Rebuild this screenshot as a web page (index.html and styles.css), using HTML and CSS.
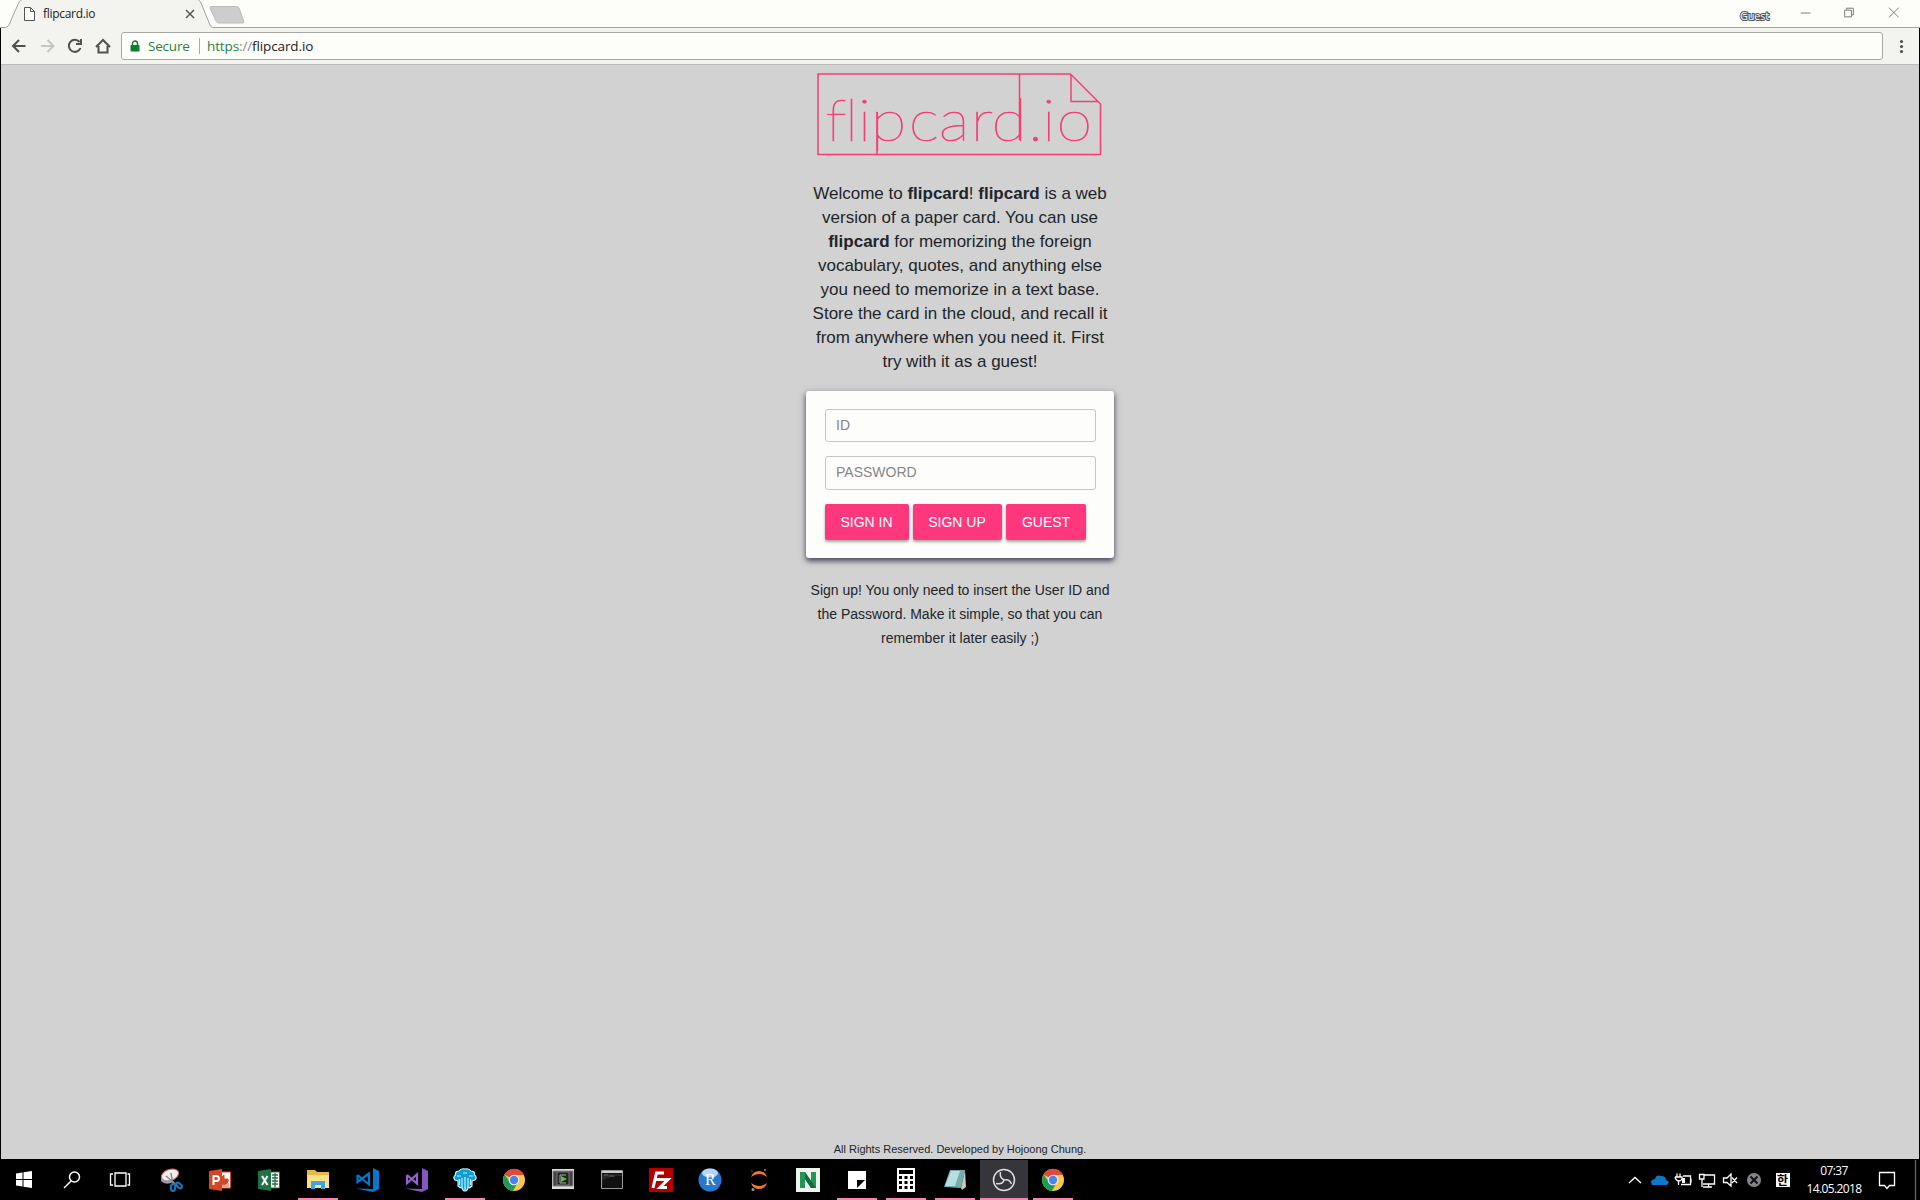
FILE: index.html
```html
<!DOCTYPE html>
<html lang="en">
<head>
<meta charset="utf-8">
<title>flipcard.io</title>
<link rel="stylesheet" href="styles.css">
</head>
<body>
<div class="desktop">
  <header class="tabstrip">
    <svg class="tabs" width="260" height="28" viewBox="0 0 260 28">
      <path class="tab-fill" d="M0 28L7 27L19 1Q20 0 22 0H197Q199 0 200 2L212 27V28Z"/>
      <path class="edge" d="M0 27.500H5Q8 27 9 25L19 2Q20 .5 22 -.5M198 -.5Q200 .5 201 3L210 25Q211 27.500 213 27.500H260"/>
      <path class="new-tab" d="M211 6.500H236Q238 6.500 239 8L244 22Q244 23 242 23H219Q217 23 216 21L210 8Q209.500 6.500 211 6.500Z"/>
      <path fill="#fff" stroke="#555" d="M24.500 7.500H30.500L34.500 11.500V20.500H24.500ZM30.500 7.500V11.500H34.500"/>
      <path stroke="#555" stroke-width="1.500" d="M186 10L194 18M194 10L186 18"/>
      <text x="43" y="18">flipcard.io</text>
    </svg>
    <div class="strip-space"></div>
    <span class="guest">Guest</span>
    <svg class="window-buttons" width="142" height="28" viewBox="0 0 142 28" fill="none" stroke="#777">
      <path d="M21 13.500H31M66.500 10.500H73.500V17.500H66.500ZM68.500 10V8.500H75.500V15.500H74M112.500 8L122.500 18M122.500 8L112.500 18"/>
    </svg>
  </header>
  <nav class="toolbar">
    <svg width="120" height="36" viewBox="0 0 120 36" fill="none" stroke="#505050" stroke-width="2">
      <path d="M25.500 18H13M19 12L13 18L19 24"/>
      <path stroke="#c4c4c4" d="M41 18H53M47.500 12L53.500 18L47.500 24"/>
      <path d="M79.500 14A6 6 0 1 0 80.500 20M81 11V16H76"/>
      <path d="M96 19L103 12L110 19M98.500 18V24.500H107.500V18"/>
    </svg>
    <div class="omnibox">
      <svg width="10" height="13" viewBox="0 0 10 13"><path fill="#0b8030" d="M1 5H9Q9.500 5 9.500 6V11.500H.5V6Q.5 5 1 5Z"/><path fill="none" stroke="#0b8030" stroke-width="1.400" d="M2.500 5V3.500A2.500 2.500 0 0 1 7.500 3.500V5"/></svg>
      <span class="secure">Secure</span>
      <span class="url"><span class="scheme">https</span><span class="slashes">://</span>flipcard.io</span>
    </div>
    <svg width="36" height="36" viewBox="0 0 36 36" fill="#505050"><circle cx="18.500" cy="13.500" r="1.600"/><circle cx="18.500" cy="18.500" r="1.600"/><circle cx="18.500" cy="23.500" r="1.600"/></svg>
  </nav>
  <main class="page">
    <div class="column">
      <svg class="logo" width="308" height="106" viewBox="6 4 308 106">
        <path d="M18 14H270.500L300.500 44V94.500H18ZM271 14V41.500H298M219.500 14V80M77 52V94"/>
        <text transform="scale(1.120 1)" y="81.500" x="22.500 40 51.500 63.400 97 124 152.500 171 203.500 216 229">flipcard.io</text>
      </svg>
      <p class="intro">Welcome to <b>flipcard</b>! <b>flipcard</b> is a web<br>version of a paper card. You can use<br><b>flipcard</b> for memorizing the foreign<br>vocabulary, quotes, and anything else<br>you need to memorize in a text base.<br>Store the card in the cloud, and recall it<br>from anywhere when you need it. First<br>try with it as a guest!</p>
      <form class="card">
        <input class="field" type="text" placeholder="ID">
        <input class="field second" type="text" placeholder="PASSWORD">
        <div class="buttons">
          <button class="btn in" type="button">SIGN IN</button>
          <button class="btn up" type="button">SIGN UP</button>
          <button class="btn visitor" type="button">GUEST</button>
        </div>
      </form>
      <p class="hint">Sign up! You only need to insert the User ID and<br>the Password. Make it simple, so that you can<br>remember it later easily ;)</p>
    </div>
    <footer class="legal">All Rights Reserved. Developed by Hojoong Chung.</footer>
  </main>
  <footer class="taskbar">
    <div class="system">
      <svg viewBox="0 0 48 41"><path fill="#fff" d="M16 14.500L22.500 13.500V20H16ZM23.500 13.300L32 12V20H23.500ZM16 21H22.500V27.500L16 26.500ZM23.500 21H32V29L23.500 27.700Z"/></svg>
      <svg viewBox="0 0 48 41" fill="none" stroke="#fff" stroke-width="1.500"><circle cx="26.500" cy="18" r="5"/><path d="M23 22L16 29"/></svg>
      <svg viewBox="0 0 48 41" fill="none" stroke="#fff" stroke-width="1.300"><path d="M19 14H30V27H19ZM17 15H14.500V26H17M31.500 15H33.500V26H31.500"/></svg>
    </div>
    <div class="apps">
      <div class="app"><svg viewBox="0 0 24 24"><ellipse cx="11" cy="7" rx="9" ry="5.500" transform="rotate(-20 11 7)" fill="#eee" stroke="#c66"/><path d="M2 10Q8 15 14 11V14Q7 18 2 13Z" fill="#99a"/><path d="M7 8L19 18M12 5L14 17" stroke="#888" stroke-width="1.500"/><g fill="none" stroke="#1675bb" stroke-width="2"><ellipse cx="14" cy="19.500" rx="2.200" ry="3.500"/><ellipse cx="20" cy="17.500" rx="2" ry="3.500" transform="rotate(-50 20 17.500)"/></g></svg></div>
      <div class="app"><svg viewBox="0 0 24 24"><path fill="#fff" stroke="#d24726" d="M12 4H22.500V20H12Z"/><path d="M14 9A4 4 0 1 0 20 11H16V7ZM14 16H21M14 18H21" fill="#d24726" stroke="#d24726"/><path fill="#d24726" d="M1 3L14 1V23L1 21Z"/><path fill="none" stroke="#fff" stroke-width="2" d="M5.500 17V8H8Q11 8 11 10.500Q11 13 8 13H6"/></svg></div>
      <div class="app"><svg viewBox="0 0 24 24"><path fill="#fff" stroke="#207245" d="M12 4H22.500V20H12Z"/><path d="M15 7H21M15 10H21M15 13H21M15 16H21M18 5V19" stroke="#207245" stroke-width="1.300"/><path fill="#207245" d="M1 3L14 1V23L1 21Z"/><path stroke="#fff" stroke-width="2" d="M5 8L10.500 17M10.500 8L5 17"/></svg></div>
      <div class="app open"><svg viewBox="0 0 24 24"><path fill="#e8b84b" d="M1 2H9L11 4H23V20H1Z"/><path fill="#fbe08a" d="M1 7H23V20H1Z"/><path fill="#35a9e1" d="M5 13H19V21H15V17H9V21H5Z"/></svg></div>
      <div class="app"><svg viewBox="0 0 24 24"><path fill="#0078d0" d="M18 0L24 3V21L18 24L1 20.500L18 21Z"/><path fill="none" stroke="#0078d0" stroke-width="2.200" d="M2.500 7V14L14 5.500V16.500L2.500 7"/></svg></div>
      <div class="app"><svg viewBox="0 0 24 24"><path fill="#8555c0" d="M18 0L24 3V21L18 24L1 20.500L18 21Z"/><path fill="none" stroke="#9560d0" stroke-width="2.200" d="M3 7V15L13 6.500V15.500L3 7"/></svg></div>
      <div class="app open"><svg viewBox="0 0 24 24"><g fill="#0b9fd6" stroke="#c8f2ff" stroke-width="1.200"><path d="M2 12Q-.5 9 2.500 7Q2 3 6 3Q8 0 12 1Q16 0 18 3Q22 3 21.500 7Q24.500 9 22 12L19 13V18Q17 20 15 20Q14 23 12 23Q10 23 9 20Q7 20 5 18V13Z"/><path fill="none" d="M9 20V10M15 20V10M12 9V22M6.500 11V17M17.500 11V17M4 8H8M10 5H14M16 8H20"/></g></svg></div>
      <div class="app"><svg viewBox="0 0 24 24"><circle cx="12" cy="12" r="11" fill="#fbc846"/><path fill="#dc4b3e" d="M12 12L2.500 6.500A11 11 0 0 1 22 7H12Z"/><path fill="#1d9b57" d="M2.500 6.500A11 11 0 0 0 11 23L16 14L12 12L8 14Z"/><circle cx="12" cy="12" r="5.300" fill="#eee"/><circle cx="12" cy="12" r="4.200" fill="#4b82eb"/></svg></div>
      <div class="app"><svg viewBox="0 0 24 24"><path fill="#ddd" d="M1 1H23V21H1Z"/><path fill="#444" stroke="#888" d="M2 3H22V18H2Z"/><path fill="#222" stroke="#777" d="M6 4H18V17H6Z"/><path fill="none" stroke="#aaa" d="M15 7H9V15H15"/><path fill="#4dc54a" d="M10 8L16 11L10 14Z"/></svg></div>
      <div class="app"><svg viewBox="0 0 24 24"><path fill="#111" stroke="#999" d="M1.500 2.500H22.500V20.500H1.500Z"/><path fill="#ccc" d="M2 3H22V5H2Z"/><path stroke="#aaa" d="M4 7H8M9 8H14"/><path d="M2 19L3 12Q10 8 22 8V6H2Z" fill="#333" opacity=".6"/></svg></div>
      <div class="app"><svg viewBox="0 0 24 24"><path fill="#b40000" d="M0 0H24V24H0Z"/><path fill="none" stroke="#fff" stroke-width="3" d="M4 20L7.500 5H15M6 11.500H12M12 11.500H19L11 19.500H18"/></svg></div>
      <div class="app"><svg viewBox="0 0 24 24"><circle cx="12" cy="12" r="11.500" fill="#2878cc"/><ellipse cx="12" cy="5" rx="8" ry="4.500" fill="#b3d4f3"/><text class="r-mark" x="7" y="17">R</text></svg></div>
      <div class="app"><svg viewBox="0 0 24 24"><path fill="#f37726" d="M4 9Q6 3 12 3Q18 3 20 9Q12 3 4 9ZM4 15Q12 21 20 15Q18 21 12 21Q6 21 4 15Z"/><circle cx="18" cy="2" r="1" fill="#888"/><circle cx="5" cy="3" r=".7" fill="#888"/><circle cx="6" cy="21.500" r="1.500" fill="#999"/></svg></div>
      <div class="app"><svg viewBox="0 0 24 24"><path fill="#eef3ee" d="M0 0H24V24H0Z"/><path fill="#249653" d="M4 20V4H9L15 13V4H20V20H15L9 11V20Z"/><path fill="#166b3b" d="M9 4L20 20H15L9 11Z"/></svg></div>
      <div class="app open"><svg viewBox="0 0 24 24"><path fill="#fff" d="M3 3H21V21H3Z"/><path d="M12 12H20L12 20Z"/></svg></div>
      <div class="app open"><svg viewBox="0 0 24 24"><path fill="#fff" d="M3 0H21V24H3Z"/><path d="M5 2H19V6H5ZM5 8H8V11H5ZM10.500 8H13.500V11H10.500ZM16 8H19V11H16ZM5 13H8V16H5ZM10.500 13H13.500V16H10.500ZM16 13H19V16H16ZM5 18H8V21H5ZM10.500 18H13.500V21H10.500ZM16 18H19V21H16Z"/></svg></div>
      <div class="app open"><svg viewBox="0 0 24 24"><path fill="#70aeb3" d="M7 2L22 2L18 20L1 19Z"/><path fill="#b8dfdf" d="M8 3L17 3L12 18L2 18Z"/><path fill="#d0c9af" d="M18 20L22 2L23 19L19 22Z"/></svg></div>
      <div class="app open active"><svg viewBox="0 0 24 24" fill="none" stroke="#ddd" stroke-width="1.500"><circle cx="12" cy="12" r="10.500"/><path d="M8.500 4Q7 9 12 12Q17.500 10.500 19.500 16M12 12Q10.500 17 4 15.500"/></svg></div>
      <div class="app open"><svg viewBox="0 0 24 24"><circle cx="12" cy="12" r="11" fill="#fbc846"/><path fill="#dc4b3e" d="M12 12L2.500 6.500A11 11 0 0 1 22 7H12Z"/><path fill="#1d9b57" d="M2.500 6.500A11 11 0 0 0 11 23L16 14L12 12L8 14Z"/><circle cx="12" cy="12" r="5.300" fill="#eee"/><circle cx="12" cy="12" r="4.200" fill="#4b82eb"/></svg></div>
    </div>
    <div class="tray">
      <svg width="180" height="41" viewBox="0 0 180 41" fill="none" stroke="#fff" stroke-width="1.300">
        <path d="M9 24L15 18.500L21 24"/>
        <path fill="#0f78cc" stroke="none" d="M32 26Q29 21 35 20Q36 15 41 17Q46 17 46 21Q51 23 47 26Z"/>
        <path d="M63 17H70.500V25.500H61M71 19.500V23.500M57 14.500V18M60 14.500V18M55 18H62V20Q61 22 59 22Q56 22 55 18M58.500 22V26"/><path fill="#fff" stroke="none" d="M62 19H65V24H62Z"/>
        <path d="M84 16H94.500V25H83M79.500 15.500H84V20H79.500ZM82 20V28M88.500 25V27.500M83 28H92"/>
        <path d="M103.500 19H107L111 15V27L107 23.500H103.500ZM112 18.500L117 24M117 18.500L112 24"/>
        <circle cx="134" cy="21" r="7" fill="#85858c" stroke="none"/><path stroke="#111" stroke-width="2" d="M130.500 17.500L137.500 24.500M137.500 17.500L130.500 24.500"/>
        <rect x="156" y="14" width="14" height="14" fill="#fff" stroke="none"/><text class="ime" x="157" y="25.500">한</text>
      </svg>
      <div class="clock"><span>07:37</span><span>14.05.2018</span></div>
      <svg width="50" height="41" viewBox="0 0 50 41" fill="none" stroke="#fff" stroke-width="1.300"><path d="M9.500 13.500H24.500V26.500H19.500L17 29.500L14.500 26.500H9.500Z"/><path stroke="#666" d="M45.500 1V41"/></svg>
    </div>
  </footer>
</div>
</body>
</html>
```
FILE: styles.css
```css
* { box-sizing: border-box; }
body { margin: 0; background: #000; }
.desktop { width: 1920px; height: 1200px; display: grid; grid-template-rows: 28px 36px 1095px 41px; overflow: hidden; font-family: "Liberation Sans", Arial, sans-serif; }
.desktop svg { display: block; flex: none; }
.tabstrip { display: flex; background: #fdfdfa; }
.tabs { fill: none; }
.tabs .edge { stroke: #a4a4a4; }
.tabs .tab-fill { fill: #f3f3ef; }
.tabs .new-tab { fill: #cdcdcd; stroke: #bbb; }
.tabs text { font: 12px "Open Sans", sans-serif; fill: #222; letter-spacing: -.3px; }
.strip-space { flex: 1; border-bottom: 1px solid #a4a4a4; }
.guest { width: 38px; padding-top: 8px; font: 11px/15px "Open Sans", sans-serif; letter-spacing: -.2px; color: #fff; -webkit-text-stroke: 2px #555; paint-order: stroke fill; border-bottom: 1px solid #a4a4a4; }
.window-buttons { border-bottom: 1px solid #a4a4a4; }
.toolbar { display: flex; background: #f3f3ef; margin: 0 1px; }
.toolbar > svg:first-child { margin-left: -1px; }
.omnibox { flex: 1; height: 28px; margin-top: 4px; margin-left: 1px; border: 1px solid #a8a8a8; border-radius: 3px; background: #fdfdfa; display: flex; align-items: center; padding-left: 8px; font: 13.500px/24px "Open Sans", sans-serif; color: #222; }
.secure { width: 52px; margin-left: 8px; margin-right: 7px; color: #2c8245; height: 16px; line-height: 16px; border-right: 1px solid #aaa; letter-spacing: -.2px; }
.url { letter-spacing: -.12px; }
.scheme { color: #2c8245; }
.slashes { color: #888; }
.page { margin: 0 1px; background: #d2d2d2; display: flex; flex-direction: column; align-items: center; justify-content: space-between; border-top: 1px solid #bbb; color: #212529; text-align: center; }
.column { width: 308px; display: flex; flex-direction: column; }
.logo { fill: none; margin-top: -1px; }
.logo path { stroke: #f53f74; stroke-width: 1.500; }
.logo text { font: 100 58px Lato, sans-serif; fill: #f53f74; stroke: #f53f74; stroke-width: .7; }
p { margin: 0; white-space: nowrap; }
.intro { margin-top: 12px; font-size: 17px; line-height: 24px; }
.card { height: 167px; margin-top: 17px; background: #fdfdfb; border-radius: 3px; padding: 18px 18px 18px 19px; box-shadow: 0 3px 5px rgba(0, 0, 30, .55), 0 2px 8px rgba(0, 0, 50, .25); }
.field { display: block; width: 271px; height: 33px; border: 1px solid #c5c5ca; border-radius: 3px; padding: 0 10px 2px; background: transparent; font: 14px "Liberation Sans", sans-serif; }
.field::placeholder { color: #868686; opacity: 1; }
.second { height: 34px; margin-top: 14px; }
.buttons { display: flex; gap: 4px; margin-top: 14px; }
.btn { height: 36px; padding: 0; border: 0; border-radius: 2px; color: #fff; background: #ff377c; font: 14px "Liberation Sans", sans-serif; box-shadow: 0 2px 3px rgba(0, 0, 0, .35); }
.in { width: 84px; padding-right: 1px; }
.up { width: 89px; padding-right: 1px; }
.visitor { width: 80px; }
.hint { font-size: 14px; line-height: 24px; margin-top: 20px; }
.legal { font-size: 11px; line-height: 13px; padding-bottom: 3px; }
.taskbar { display: flex; background: #000; }
.system { display: flex; width: 147px; }
.system svg { width: 48px; height: 41px; }
.apps { display: flex; gap: 1px; flex: 1; }
.app { width: 48px; padding: 9px 12px 0; }
.app svg { width: 24px; height: 24px; }
.open { background: linear-gradient(#f984b0, #f984b0) 4px 39px / 40px 2px no-repeat; }
.active { background: linear-gradient(#f984b0, #f984b0) 0 39px / 48px 2px no-repeat, linear-gradient(#35353b, #35353b) 0 1px no-repeat; }
.r-mark { font: 16px "Liberation Serif", serif; fill: #fff; }
.tray { display: flex; width: 300px; }
.ime { font: bold 12px "Noto Sans CJK KR", sans-serif; fill: #000; stroke: none; }
.clock { width: 70px; display: flex; flex-direction: column; align-items: center; padding-top: 3px; color: #fff; font: 12px/18px "Open Sans", sans-serif; letter-spacing: -.6px; margin-left: -1px; margin-right: 1px; }
```
